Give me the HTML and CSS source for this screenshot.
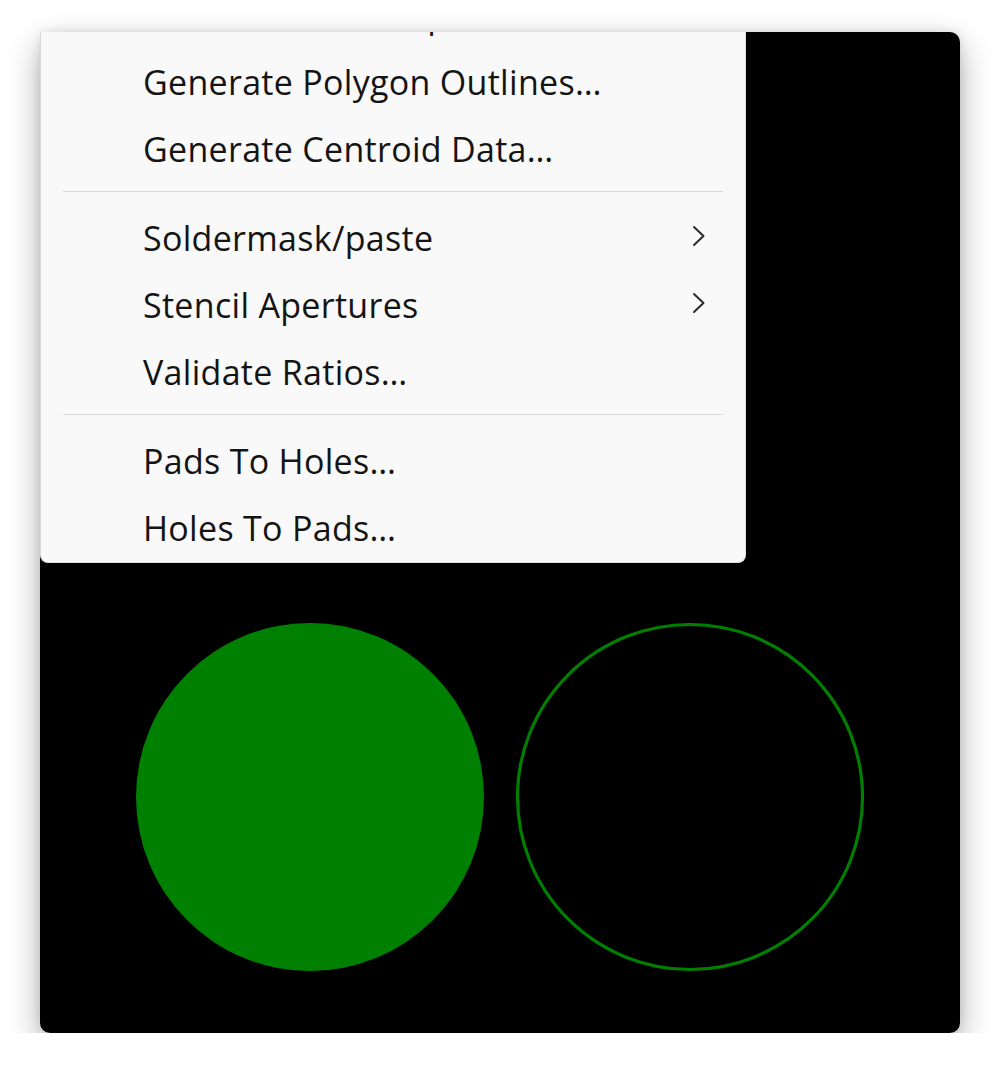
FILE: index.html
```html
<!DOCTYPE html>
<html lang="en">
<head>
<meta charset="utf-8">
<title>Pad tools menu</title>
<link rel="stylesheet" href="styles.css">
</head>
<body>
<div class="window">
  <svg class="canvas" width="920" height="1001" viewBox="0 0 920 1001">
    <circle cx="270" cy="765" r="174" fill="#008000"/>
    <circle cx="650" cy="765" r="172.5" fill="none" stroke="#008000" stroke-width="3.2"/>
  </svg>
  <div class="menu">
    <ul class="items">
      <li class="item">Generate Drill Map…</li>
      <li class="item">Generate Polygon Outlines…</li>
      <li class="item">Generate Centroid Data…</li>
      <li class="sep"></li>
      <li class="item sub">Soldermask/paste<svg class="chev" width="14" height="22" viewBox="0 0 14 22"><path d="M2 2 L11.5 11 L2 20" fill="none" stroke="#2b2b2b" stroke-width="2" stroke-linecap="round" stroke-linejoin="round"/></svg></li>
      <li class="item sub">Stencil Apertures<svg class="chev" width="14" height="22" viewBox="0 0 14 22"><path d="M2 2 L11.5 11 L2 20" fill="none" stroke="#2b2b2b" stroke-width="2" stroke-linecap="round" stroke-linejoin="round"/></svg></li>
      <li class="item">Validate Ratios…</li>
      <li class="sep"></li>
      <li class="item">Pads To Holes…</li>
      <li class="item">Holes To Pads…</li>
    </ul>
  </div>
</div>
</body>
</html>
```

FILE: styles.css
```css
html, body {
  margin: 0;
  padding: 0;
  background: #ffffff;
}

body {
  padding: 32px 40px 0 40px;
  font-family: "Open Sans", "Noto Sans", "Liberation Sans", sans-serif;
}

.window {
  position: relative;
  width: 920px;
  height: 1001px;
  background: #000000;
  border-radius: 10px;
  box-shadow: 0 12px 32px rgba(0, 0, 0, 0.32), 0 0 10px rgba(0, 0, 0, 0.1);
}

.canvas {
  display: block;
}

.menu {
  position: absolute;
  top: 0;
  left: 0;
  width: 704px;
  height: 530px;
  background: #f9f9f9;
  border: 1px solid #dcdcdc;
  border-top: none;
  border-radius: 0 0 8px 8px;
  overflow: hidden;
  box-sizing: content-box;
}

.items {
  list-style: none;
  margin: -48px 0 0 0;
  padding: 0;
}

.item {
  display: flex;
  align-items: center;
  justify-content: space-between;
  height: 62px;
  line-height: 62px;
  padding: 0 39px 5px 102px;
  font-size: 34px;
  letter-spacing: 0.3px;
  color: #141414;
  white-space: nowrap;
}

.chev {
  display: block;
  margin-top: -4px;
}

.sep {
  height: 1px;
  background: #d8d8d8;
  margin: 6px 22px 15px 22px;
}
```
